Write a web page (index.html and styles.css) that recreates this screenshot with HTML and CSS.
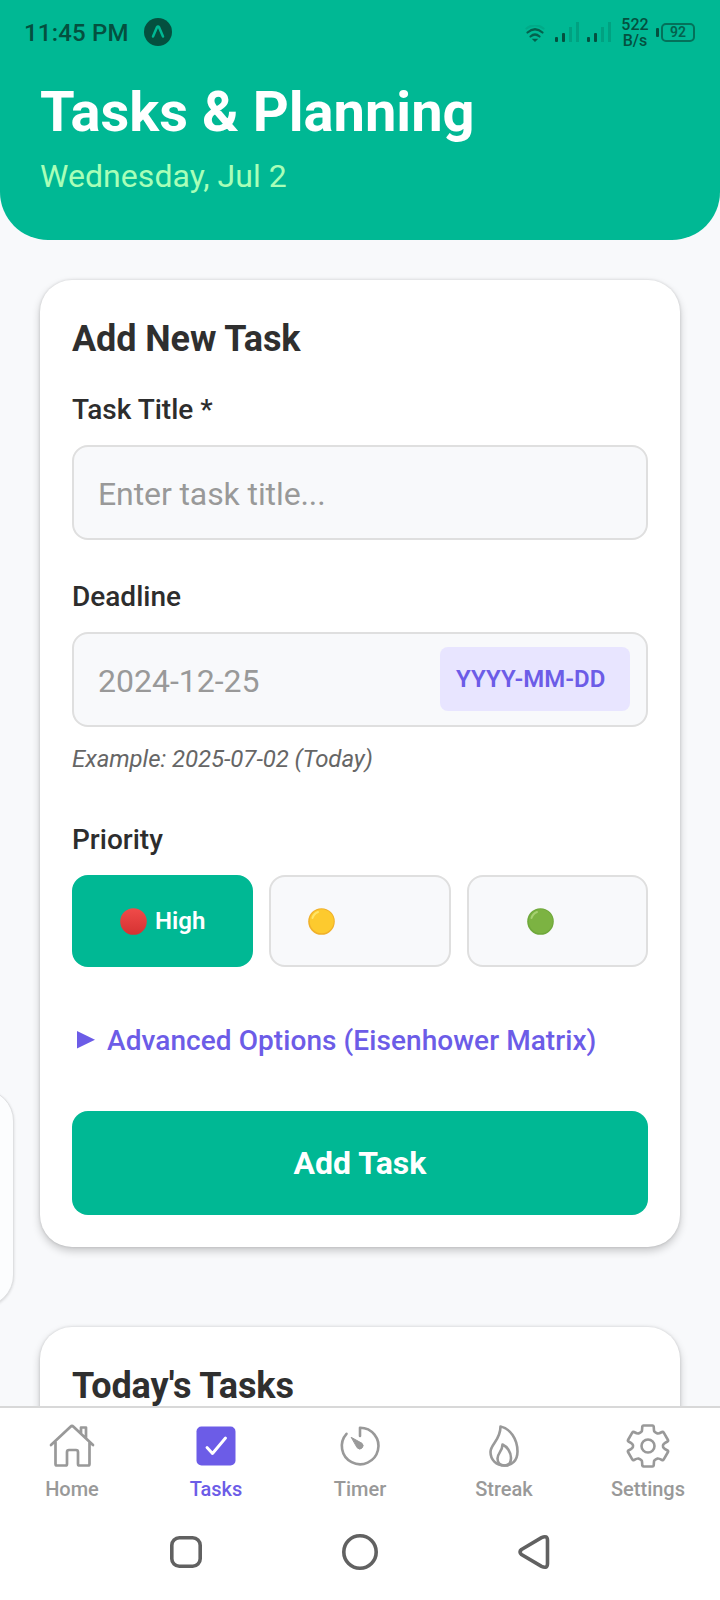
FILE: index.html
```html
<!DOCTYPE html>
<html lang="en">
<head>
<meta charset="utf-8">
<title>Tasks &amp; Planning</title>
<link rel="stylesheet" href="styles.css">
</head>
<body>
<div class="screen">
  <header class="header">
    <div class="status">
      <span class="clock">11:45 PM</span>
      <svg class="expo" width="28" height="28" viewBox="0 0 28 28"><circle cx="14" cy="14" r="14" fill="#04503f"/><path d="M9 18.5 13 9.2Q14 7.6 15 9.2L19 18.5" fill="none" stroke="#00b894" stroke-width="2.5" stroke-linecap="round"/></svg>
      <div class="status-right">
        <svg class="wifi" width="20" height="18" viewBox="0 0 20 18" fill="none" stroke="#04614d" stroke-width="2.2" stroke-linecap="round"><path d="M1.500 3.500Q10-3 18.500 3.500" opacity=".15"/><path d="M2.500 7.500Q10 1 17.500 7.500M5.500 11.500Q10 7.500 14.500 11.500"/><path d="M8.500 14.500h3L10 16z" fill="#04614d" stroke-width="1.500"/></svg>
        <svg class="signal" width="26" height="20" viewBox="0 0 26 20" fill="#04503f"><rect y="15" width="3" height="5" rx="1"/><rect x="7" y="11" width="3" height="9" rx="1"/><rect x="14" y="5" width="3" height="15" opacity=".22"/><rect x="21" width="3" height="20" opacity=".22"/></svg>
        <svg class="signal signal-two" width="26" height="20" viewBox="0 0 26 20" fill="#04503f"><rect y="15" width="3" height="5" rx="1"/><rect x="7" y="11" width="3" height="9" rx="1"/><rect x="14" y="5" width="3" height="15" opacity=".22"/><rect x="21" width="3" height="20" opacity=".22"/></svg>
        <div class="speed"><span>522</span><span>B/s</span></div>
        <div class="battery"><i class="battery-tip"></i><span class="battery-body">92</span></div>
      </div>
    </div>
    <h1 class="title">Tasks &amp; Planning</h1>
    <p class="date">Wednesday, Jul 2</p>
  </header>

  <main class="content">
    <div class="edge-panel"></div>
    <section class="card">
      <h2 class="card-title">Add New Task</h2>
      <div class="label">Task Title *</div>
      <div class="input input-title">Enter task title...</div>
      <div class="label label-deadline">Deadline</div>
      <div class="input">2024-12-25<span class="format">YYYY-MM-DD</span></div>
      <div class="hint">Example: 2025-07-02 (Today)</div>
      <div class="label label-priority">Priority</div>
      <div class="priorities">
        <div class="priority priority-active"><svg class="dot" width="27" height="27" viewBox="0 0 27 27"><defs><linearGradient id="r" x2="0" y2="1"><stop stop-color="#f04b49"/><stop offset="1" stop-color="#d53232"/></linearGradient></defs><circle cx="13.500" cy="13.500" r="13.300" fill="url(#r)"/></svg><span class="priority-text">High</span></div>
        <div class="priority priority-medium"><svg width="27" height="27" viewBox="0 0 27 27"><circle cx="13.500" cy="13.500" r="13.300" fill="#f0b02a"/><circle cx="13.700" cy="13.200" r="12" fill="#fdca2e"/><path d="M4.500 10Q6 5.500 10 4" stroke="#ffe566" stroke-width="2" stroke-linecap="round" fill="none"/></svg></div>
        <div class="priority priority-low"><svg width="27" height="27" viewBox="0 0 27 27"><circle cx="13.500" cy="13.500" r="13.300" fill="#6fa83b"/><circle cx="13.700" cy="13.200" r="12" fill="#7cb342"/><path d="M4.500 10Q6 5.500 10 4" stroke="#a5d070" stroke-width="2" stroke-linecap="round" fill="none"/></svg></div>
      </div>
      <div class="advanced"><svg width="18" height="18" viewBox="0 0 18 18"><path d="M0 0 18 8.700 0 17.400z" fill="#6c5ce7"/></svg><span>Advanced Options (Eisenhower Matrix)</span></div>
      <div class="submit">Add Task</div>
    </section>
    <section class="card">
      <h2 class="card-title">Today's Tasks</h2>
    </section>
  </main>

  <nav class="tabs">
    <div class="tab"><svg width="48" height="48" viewBox="0 0 48 48" fill="none" stroke="#999" stroke-width="2.700" stroke-linejoin="round" stroke-linecap="round"><path d="M3 23 22.500 4.700Q24 3.300 25.500 4.700L45 23M7.500 20V42Q7.500 43.500 9 43.500H17.500Q19 43.500 19 42V30Q19 28 21 28H28Q30 28 30 30V42Q30 43.500 31.500 43.500H40Q41.500 43.500 41.500 42V20M33 11V5.500H38V16"/></svg><span>Home</span></div>
    <div class="tab tab-active"><svg width="48" height="48" viewBox="0 0 48 48"><rect x="4.500" y="4.500" width="39" height="39" rx="5" fill="#6c5ce7"/><path d="M15 25.500 20.500 31.500 33.500 16" fill="none" stroke="#fff" stroke-width="2.900" stroke-linecap="round" stroke-linejoin="round"/></svg><span>Tasks</span></div>
    <div class="tab"><svg width="48" height="48" viewBox="0 0 48 48" fill="none" stroke="#999" stroke-width="2.600" stroke-linecap="round" stroke-linejoin="round"><path d="M10.500 11.800A18.300 18.300 0 1 0 24 5.700V14"/><path d="M15.500 15.500 26 21.300A3 3 0 1 1 21.400 26Z" fill="#999" stroke-width="1"/></svg><span>Timer</span></div>
    <div class="tab"><svg width="48" height="48" viewBox="0 0 48 48" fill="none" stroke="#999" stroke-width="2.600" stroke-linejoin="round"><path d="M20.500 4.500C30 6.500 37.500 17 37.500 29.500C37.500 38.500 32 43.500 24.500 43.500C16 43.500 10.500 37.500 10.500 30C10.500 22 20.500 18.500 20.500 4.500Z"/><path d="M22.500 22.500C27 24.500 31 30 31 36C31 41 28.500 43.500 24.500 43.500C20.500 43.500 17.500 41 17.500 36.500C17.500 31 22.500 29.500 22.500 22.500Z"/></svg><span>Streak</span></div>
    <div class="tab"><svg width="48" height="48" viewBox="0 0 48 48" fill="none" stroke="#999" stroke-width="2.600" stroke-linejoin="round"><path d="M19.500 3.500H28.500Q29.500 3.500 29.700 4.500L30 8.500Q30 10 33.500 11.500Q34.500 12 38 10Q39 9.500 39.600 10.400L44 18Q44.500 19 43.500 19.500Q38.500 22 39 24Q38.500 26 43.500 28.500Q44.500 29 44 30L39.600 37.600Q39 38.500 38 38Q34.500 36 33.500 36.500Q30 38 30 39.500L29.700 43.500Q29.500 44.500 28.500 44.500H19.500Q18.500 44.500 18.300 43.500L18 39.500Q18 38 14.500 36.500Q13.500 36 10 38Q9 38.500 8.400 37.600L4 30Q3.500 29 4.500 28.500Q9.500 26 9 24Q9.500 22 4.500 19.500Q3.500 19 4 18L8.400 10.400Q9 9.500 10 10Q13.500 12 14.500 11.500Q18 10 18 8.500L18.300 4.500Q18.500 3.500 19.500 3.500Z"/><circle cx="24" cy="24" r="6.500"/></svg><span>Settings</span></div>
  </nav>
  <div class="system-nav">
    <svg width="40" height="40" viewBox="0 0 40 40" fill="none" stroke="#616161" stroke-width="3.600"><rect x="5.800" y="5.800" width="28.400" height="28.400" rx="7.500"/></svg>
    <svg width="40" height="40" viewBox="0 0 40 40" fill="none" stroke="#616161" stroke-width="3.600"><circle cx="20" cy="20" r="16.200"/></svg>
    <svg width="40" height="40" viewBox="0 0 40 40" fill="none" stroke="#616161" stroke-width="3.600"><path d="M7.500 17.500 27.500 5.600Q33.500 2.800 33.500 8.500V31.500Q33.500 37.200 27.500 34.400L7.500 22.500Q4.500 20 7.500 17.500Z"/></svg>
  </div>
</div>
</body>
</html>
```
FILE: styles.css
```css
* { box-sizing: border-box; }
body {
  margin: 0;
  background: #f8f9fb;
  font-family: Roboto, "Liberation Sans", sans-serif;
  color: #2d2d2d;
}
h1, h2, p { margin: 0; }
svg { display: block; flex: none; }
.screen {
  width: 720px;
  height: 1600px;
  display: flex;
  flex-direction: column;
  overflow: hidden;
}
.header {
  flex: none;
  height: 240px;
  background: #00b894;
  border-radius: 0 0 48px 48px;
}
.status {
  height: 64px;
  padding: 0 25px 0 24px;
  display: flex;
  align-items: center;
  color: #04503f;
}
.clock { width: 104px; font-size: 24px; line-height: 28px; letter-spacing: .2px; font-weight: 500; margin-top: 2px; white-space: nowrap; }
.expo { margin-left: 16px; }
.status-right { margin-left: auto; display: flex; align-items: center; }
.wifi { margin-right: 10px; margin-top: 4px; }
.signal { margin-right: 6px; }
.signal-two { margin-right: 8px; }
.speed {
  width: 28px;
  display: flex;
  flex-direction: column;
  align-items: center;
  font-size: 16px;
  font-weight: 500;
  line-height: 16px;
  margin-top: 1px;
}
.battery { display: flex; align-items: center; margin-left: 7px; }
.battery-tip { width: 3px; height: 9px; background: #04503f; border-radius: 1px; margin-right: 2px; }
.battery-body {
  width: 34px;
  height: 19px;
  border: 2px solid #04715a;
  border-radius: 5px;
  font-size: 14px;
  font-weight: 600;
  line-height: 15px;
  text-align: center;
  color: #04614d;
}
.title { margin: 15px 0 0 40px; font-size: 56px; line-height: 66px; font-weight: 700; color: #fff; }
.date { margin: 12px 0 0 40px; font-size: 32px; line-height: 38px; color: #a8ffb8; letter-spacing: .05px; }
.content {
  position: relative;
  flex: 1;
  min-height: 0;
  padding: 40px 40px 0;
  display: flex;
  flex-direction: column;
  gap: 80px;
  overflow: hidden;
}
/* Drawer handle that overlaps the left edge of the scroll area */
.edge-panel {
  position: absolute;
  left: -60px;
  top: 849px;
  width: 74px;
  height: 218px;
  border-radius: 32px;
  background: #fcfdfe;
  border: 1px solid #dfe0e2;
  box-shadow: 0 1px 3px rgba(0,0,0,.14);
}
.card {
  flex: none;
  padding: 32px;
  border-radius: 32px;
  background: #fff;
  box-shadow: 0 4px 8px rgba(0,0,0,.2), 0 0 3px rgba(0,0,0,.14);
}
.card-title { font-size: 36px; line-height: 54px; font-weight: 700; color: #2f2f2f; letter-spacing: -.1px; }
.label { margin-top: 27px; height: 34px; font-size: 28px; line-height: 34px; font-weight: 500; }
.label-deadline { margin-top: 40px; }
.label-priority { margin-top: 50px; }
.input {
  margin-top: 18px;
  height: 95px;
  padding: 3px 16px 0 24px;
  display: flex;
  align-items: center;
  justify-content: space-between;
  border: 2px solid #dfdfdf;
  border-radius: 16px;
  background: #f8f9fb;
  font-size: 32px;
  color: #999;
}
.input-title { letter-spacing: -.1px; }
.format {
  width: 190px;
  height: 64px;
  margin-top: -4px;
  padding-left: 16px;
  border-radius: 8px;
  background: #e8e5ff;
  color: #6c5ce7;
  font-size: 24px;
  line-height: 64px;
  font-weight: 600;
}
.hint { margin-top: 18px; height: 28px; font-size: 24px; line-height: 28px; font-style: italic; color: #666; letter-spacing: -.07px; }
.priorities { margin-top: 18px; display: grid; grid-template-columns: repeat(3, 1fr); gap: 16px; }
.priority {
  height: 92px;
  display: flex;
  align-items: center;
  border: 2px solid #dfdfdf;
  border-radius: 16px;
  background: #f8f9fb;
}
.priority-active { border-color: #00b894; background: #00b894; color: #fff; padding-left: 46px; gap: 8px; font-size: 24px; font-weight: 600; }
.priority-medium { padding-left: 37px; }
.priority-low { padding-left: 58px; }
.advanced { margin-top: 56px; height: 34px; padding-left: 5px; display: flex; align-items: center; gap: 12px; font-size: 28px; font-weight: 500; color: #6c5ce7; letter-spacing: .07px; white-space: nowrap; }
.submit {
  margin-top: 54px;
  height: 104px;
  border-radius: 16px;
  background: #00b894;
  color: #fff;
  font-size: 32px;
  font-weight: 700;
  line-height: 104px;
  text-align: center;
}
.tabs {
  position: relative;
  flex: none;
  height: 108px;
  padding-top: 14px;
  border-top: 2px solid #d8d8d8;
  background: #fff;
  display: grid;
  grid-template-columns: repeat(5, 1fr);
}
.tab { display: flex; flex-direction: column; align-items: center; gap: 7px; font-size: 20px; line-height: 24px; font-weight: 500; color: #999; }
.tab-active { color: #6c5ce7; }
.system-nav { flex: none; height: 86px; padding: 18px 166px 0; display: flex; justify-content: space-between; background: #fff; }
```
